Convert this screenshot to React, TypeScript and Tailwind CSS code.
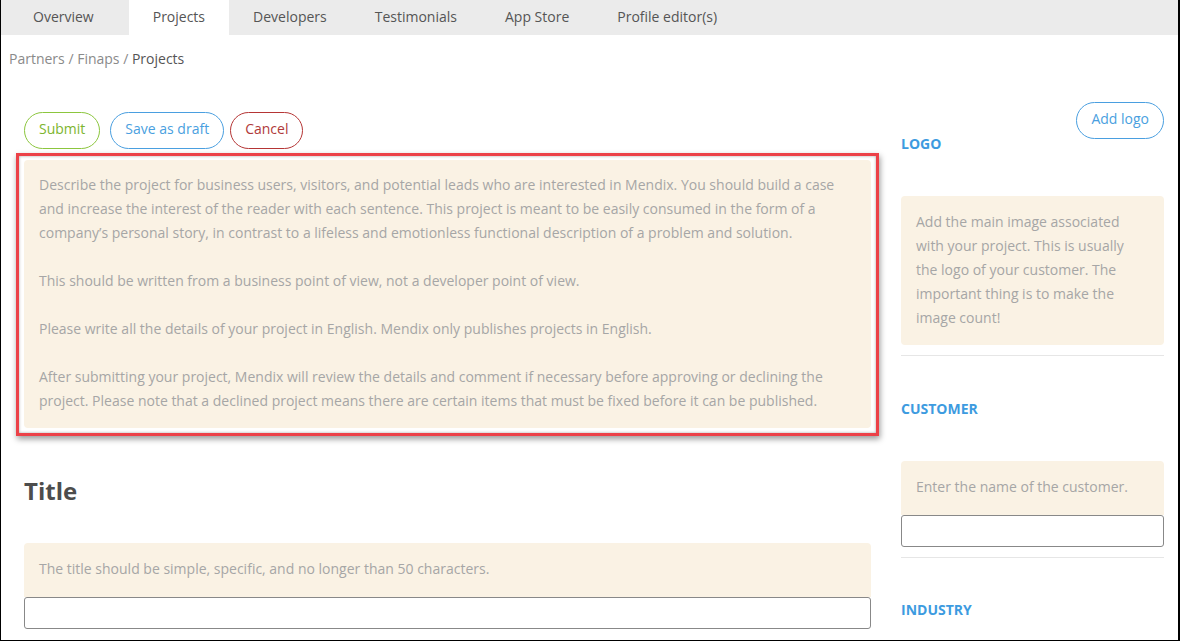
import React from "react";

const tabs = ["Overview", "Projects", "Developers", "Testimonials", "App Store", "Profile editor(s)"];

function Label({ children, className = "" }: { children: React.ReactNode; className?: string }) {
  return (
    <div className={`text-[14px] leading-[20px] font-bold text-[#3d9be0] uppercase ${className}`}>{children}</div>
  );
}

function Hint({ children, className = "" }: { children: React.ReactNode; className?: string }) {
  return (
    <div className={`bg-[#faf2e4] text-[#a6a6a6] text-[14px] leading-[24px] pl-[15px] ${className}`}>{children}</div>
  );
}

export default function App() {
  return (
    <div className="w-[1180px] h-[641px] overflow-hidden bg-white border-l border-r-2 border-b border-black font-['Open_Sans',sans-serif] flex flex-col">
      <nav className="flex h-[35px] shrink-0 bg-[#ebebeb] text-[14px] text-[#555]">
        {tabs.map((t, i) => (
          <div
            key={t}
            className={`flex items-center pb-[3px] ${i === 0 ? "pl-[32px] pr-[35px]" : "px-[24px]"} ${i === 1 ? "bg-white" : ""}`}
          >
            {t}
          </div>
        ))}
      </nav>
      <div className="pl-[8px] pt-[14px] text-[14px] leading-[20px] text-[#8a8a8a]">
        Partners / Finaps / <span className="text-[#555]">Projects</span>
      </div>
      <div className="flex pl-[23px] pr-[13px] gap-[30px] mt-[33px]">
        <div className="w-[847px] shrink-0">
          <div className="flex mt-[10px] text-[14px]">
            <button className="h-[37px] pb-[4px] px-[14px] rounded-full border border-[#8cc63e] text-[#7db52e] mr-[10px]">Submit</button>
            <button className="h-[37px] pb-[4px] px-[14px] rounded-full border border-[#4a9fe0] text-[#4a9fe0] mr-[6px]">Save as draft</button>
            <button className="h-[37px] pb-[4px] px-[14px] rounded-full border border-[#b53535] text-[#b03a3a]">Cancel</button>
          </div>
          <div className="-mx-[8px] mt-[4px] border-[3px] border-[#ec4148] pt-[4px] pb-[5px] px-[5px] shadow-[1px_3px_6px_rgba(0,0,0,0.4),inset_0_0_3px_rgba(0,0,0,0.35)]">
            <Hint className="pr-[15px] pt-[13px] pb-[15px] rounded-[4px]">
              <p>
                Describe the project for business users, visitors, and potential leads who are interested in Mendix. You should build a case and increase the interest of the reader with each sentence. This project is meant to be easily consumed in the form of a company’s personal story, in contrast to a lifeless and emotionless functional description of a problem and solution.
              </p>
              <p className="mt-[24px]">This should be written from a business point of view, not a developer point of view.</p>
              <p className="mt-[24px]">Please write all the details of your project in English. Mendix only publishes projects in English.</p>
              <p className="mt-[24px]">
                After submitting your project, Mendix will review the details and comment if necessary before approving or declining the project. Please note that a declined project means there are certain items that must be fixed before it can be published.
              </p>
            </Hint>
          </div>
          <h2 className="mt-[40px] text-[24px] leading-[30px] font-bold text-[#4d4d4d]">Title</h2>
          <Hint className="pr-[15px] mt-[37px] pt-[14px] pb-[16px] rounded-t-[4px]">The title should be simple, specific, and no longer than 50 characters.</Hint>
          <div className="h-[32px] border border-[#888] rounded-[3px]" />
        </div>
        <div className="w-[263px] shrink-0">
          <div className="flex justify-between items-start">
            <Label className="mt-[32px]">Logo</Label>
            <button className="h-[37px] pb-[4px] px-[14px] rounded-full border border-[#4a9fe0] text-[#4a9fe0] text-[14px]">Add logo</button>
          </div>
          <Hint className="mt-[42px] pr-[30px] pt-[14px] pb-[15px] rounded-[4px]">
            Add the main image associated with your project. This is usually the logo of your customer. The important thing is to make the image count!
          </Hint>
          <div className="mt-[10px] h-px bg-[#e6e6e6]" />
          <Label className="mt-[43px]">Customer</Label>
          <Hint className="pr-[15px] mt-[42px] pt-[14px] pb-[16px] rounded-t-[4px]">Enter the name of the customer.</Hint>
          <div className="h-[32px] border border-[#888] rounded-[3px]" />
          <div className="mt-[10px] h-px bg-[#e6e6e6]" />
          <Label className="mt-[42px]">Industry</Label>
        </div>
      </div>
    </div>
  );
}
